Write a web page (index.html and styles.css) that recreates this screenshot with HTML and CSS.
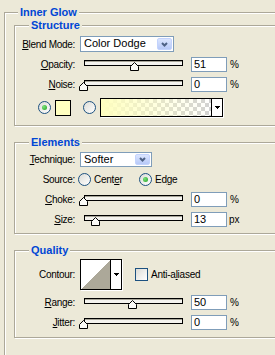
FILE: index.html
```html
<!DOCTYPE html>
<html lang="en">

<head>
    <meta charset="UTF-8">
    <meta name="viewport" content="width=device-width, initial-scale=1.0">
    <title>Inner Glow</title>
    <link rel="stylesheet" href="styles.css">
</head>

<body>
    <div class="dialog">
        <div class="group outer">
            <div class="legend">Inner Glow</div>

            <!-- Structure -->
            <div class="group inner structure">
                <div class="legend">Structure</div>
                <div class="body">
                    <div class="row tall">
                        <span class="label"><u>B</u>lend Mode:</span>
                        <div class="select blend">
                            <span class="value">Color Dodge</span>
                            <span class="drop"><svg width="7" height="5" viewBox="0 0 7 5"><path d="M1 1l2.5 2.5L6 1" fill="none" stroke="#4d6185" stroke-width="2"/></svg></span>
                        </div>
                    </div>
                    <div class="row">
                        <span class="label"><u>O</u>pacity:</span>
                        <div class="slider">
                            <div class="track"></div>
                            <svg class="thumb" style="left: 50px" width="9" height="9" viewBox="0 0 9 9"><path d="M0.5 8.5V4.5L4.5 0.5L8.5 4.5V8.5Z" fill="#fbfbf7" stroke="#000"/></svg>
                        </div>
                        <div class="field">51</div>
                        <span class="unit">%</span>
                    </div>
                    <div class="row">
                        <span class="label"><u>N</u>oise:</span>
                        <div class="slider">
                            <div class="track"></div>
                            <svg class="thumb" style="left: -1px" width="9" height="9" viewBox="0 0 9 9"><path d="M0.5 8.5V4.5L4.5 0.5L8.5 4.5V8.5Z" fill="#fbfbf7" stroke="#000"/></svg>
                        </div>
                        <div class="field">0</div>
                        <span class="unit">%</span>
                    </div>
                    <div class="row colors">
                        <span class="radio on first"></span>
                        <span class="swatch"></span>
                        <span class="radio second"></span>
                        <div class="gradient">
                            <div class="ramp"></div>
                            <div class="arrow"><svg width="5" height="3" viewBox="0 0 5 3"><path d="M0 0h5v1H0zM1 1h3v1H1zM2 2h1v1H2z"/></svg></div>
                        </div>
                    </div>
                </div>
            </div>

            <!-- Elements -->
            <div class="group inner elements">
                <div class="legend">Elements</div>
                <div class="body">
                    <div class="row">
                        <span class="label"><u>T</u>echnique:</span>
                        <div class="select technique">
                            <span class="value">Softer</span>
                            <span class="drop"><svg width="7" height="5" viewBox="0 0 7 5"><path d="M1 1l2.5 2.5L6 1" fill="none" stroke="#4d6185" stroke-width="2"/></svg></span>
                        </div>
                    </div>
                    <div class="row">
                        <span class="label near">Source:</span>
                        <label class="opt center">
                            <span class="radio"></span>
                            <span class="text">Cent<u>e</u>r</span>
                        </label>
                        <label class="opt">
                            <span class="radio on"></span>
                            <span class="text">Ed<u>g</u>e</span>
                        </label>
                    </div>
                    <div class="row">
                        <span class="label"><u>C</u>hoke:</span>
                        <div class="slider">
                            <div class="track"></div>
                            <svg class="thumb" style="left: -1px" width="9" height="9" viewBox="0 0 9 9"><path d="M0.5 8.5V4.5L4.5 0.5L8.5 4.5V8.5Z" fill="#fbfbf7" stroke="#000"/></svg>
                        </div>
                        <div class="field">0</div>
                        <span class="unit">%</span>
                    </div>
                    <div class="row">
                        <span class="label"><u>S</u>ize:</span>
                        <div class="slider">
                            <div class="track"></div>
                            <svg class="thumb" style="left: 11px" width="9" height="9" viewBox="0 0 9 9"><path d="M0.5 8.5V4.5L4.5 0.5L8.5 4.5V8.5Z" fill="#fbfbf7" stroke="#000"/></svg>
                        </div>
                        <div class="field">13</div>
                        <span class="unit px">px</span>
                    </div>
                </div>
            </div>

            <!-- Quality -->
            <div class="group inner quality">
                <div class="legend">Quality</div>
                <div class="body">
                    <div class="row contour-row">
                        <span class="label">Contour:</span>
                        <div class="contour">
                            <div class="curve"></div>
                            <div class="arrow"><svg width="5" height="3" viewBox="0 0 5 3"><path d="M0 0h5v1H0zM1 1h3v1H1zM2 2h1v1H2z"/></svg></div>
                        </div>
                        <span class="check"></span>
                        <span class="text">Anti-a<u>l</u>iased</span>
                    </div>
                    <div class="row">
                        <span class="label"><u>R</u>ange:</span>
                        <div class="slider">
                            <div class="track"></div>
                            <svg class="thumb" style="left: 48px" width="9" height="9" viewBox="0 0 9 9"><path d="M0.5 8.5V4.5L4.5 0.5L8.5 4.5V8.5Z" fill="#fbfbf7" stroke="#000"/></svg>
                        </div>
                        <div class="field">50</div>
                        <span class="unit">%</span>
                    </div>
                    <div class="row">
                        <span class="label"><u>J</u>itter:</span>
                        <div class="slider">
                            <div class="track"></div>
                            <svg class="thumb" style="left: -1px" width="9" height="9" viewBox="0 0 9 9"><path d="M0.5 8.5V4.5L4.5 0.5L8.5 4.5V8.5Z" fill="#fbfbf7" stroke="#000"/></svg>
                        </div>
                        <div class="field">0</div>
                        <span class="unit">%</span>
                    </div>
                </div>
            </div>
        </div>
    </div>
</body>

</html>
```

FILE: styles.css
```css
body {
    margin: 0;
    background-color: #ece9d8;
    font-family: "Liberation Sans", Arial, sans-serif;
    font-size: 10px;
    color: #000;
    overflow: hidden;
}

.dialog {
    width: 275px;
    height: 355px;
    overflow: hidden;
}

/* Etched group boxes */
.group {
    border: 1px solid #aca899;
    box-shadow: 1px 1px 0 #fff, inset 1px 1px 0 #fff;
}

.outer {
    margin: 12px 0 0 4px;
    width: 320px;
    padding-bottom: 40px;
}

.inner {
    margin-left: 9px;
    width: 300px;
}

.structure {
    margin-top: 6px;
}

.elements,
.quality {
    margin-top: 16px;
}

.legend {
    width: fit-content;
    height: 13px;
    line-height: 13px;
    margin: -7px 0 0 13px;
    padding: 0 2px;
    background-color: #ece9d8;
    color: #0046d5;
    font-size: 11px;
    font-weight: bold;
}

.inner .legend {
    margin-left: 14px;
}

.body {
    display: flex;
    flex-direction: column;
    gap: 5px;
}

.structure .body {
    padding: 4px 0 8px;
}

.elements .body {
    padding: 3px 0 6px;
}

.quality .body {
    padding: 2px 0 7px;
}

/* Rows */
.row {
    display: flex;
    align-items: center;
    height: 15px;
}

.row.tall {
    height: 16px;
}

.row.colors {
    height: 19px;
    margin-top: 1px;
}

.row.contour-row {
    height: 31px;
}

.label {
    flex: none;
    width: 60px;
    margin-right: 5px;
    text-align: right;
    letter-spacing: -0.3px;
    white-space: nowrap;
}

.label.near {
    margin-right: 3px;
}

.text {
    letter-spacing: -0.25px;
    white-space: nowrap;
}

u {
    text-underline-offset: 1px;
}

/* Combo boxes */
.select {
    display: flex;
    box-sizing: border-box;
    border: 1px solid #7f9db9;
    background-color: #fff;
    font-size: 11px;
}

.select.blend {
    width: 94px;
    height: 16px;
}

.select.technique {
    width: 72px;
    height: 15px;
}

.select .value {
    flex: 1;
    padding-left: 3px;
    line-height: 13px;
}

.select .drop {
    width: 15px;
    margin: 1px 1px 1px 0;
    box-sizing: border-box;
    border: 1px solid #c3d3fd;
    border-radius: 2px;
    background: linear-gradient(#dbe5fe, #b7c9f8);
    display: flex;
    align-items: center;
    justify-content: center;
}

/* Sliders */
.slider {
    position: relative;
    flex: none;
    width: 107px;
    height: 15px;
    margin-right: 4px;
}

.track {
    height: 6px;
    margin: 3px 4px 0;
    box-sizing: border-box;
    border: 1px solid #000;
    background-color: #f4f3ee;
    box-shadow: inset 0 1px 0 #a7a598;
}

.thumb {
    position: absolute;
    top: 5px;
    display: block;
}

.field {
    flex: none;
    width: 36px;
    height: 15px;
    box-sizing: border-box;
    border: 1px solid #7f9db9;
    background-color: #fff;
    padding-left: 2px;
    font-size: 11px;
    line-height: 13px;
}

.unit {
    margin-left: 3px;
    font-size: 10px;
}

.unit.px {
    margin-left: 2px;
}

/* Radios and check boxes */
.radio,
.check {
    flex: none;
    width: 13px;
    height: 13px;
    box-sizing: border-box;
    border: 1px solid #1c5180;
    background: linear-gradient(135deg, #dcdcd7, #fff);
}

.radio {
    border-radius: 50%;
    display: flex;
    align-items: center;
    justify-content: center;
}

.radio.on::after {
    content: "";
    width: 5px;
    height: 5px;
    border-radius: 50%;
    background: radial-gradient(circle at 35% 35%, #7ce27c, #21a121);
}

.opt {
    display: flex;
    align-items: center;
    gap: 3px;
}

.opt.center {
    width: 61px;
}

.radio.first {
    margin-left: 23px;
}

.swatch {
    flex: none;
    width: 16px;
    height: 16px;
    margin-left: 4px;
    box-sizing: border-box;
    border: 1px solid #000;
    background-color: #ffffc0;
}

.radio.second {
    margin-left: 12px;
}

/* Gradient and contour pickers */
.gradient,
.contour {
    display: flex;
    flex: none;
    box-sizing: border-box;
    border: 1px solid #000;
    box-shadow: 1px 1px 0 #fff;
}

.gradient {
    width: 123px;
    height: 19px;
    margin-left: 4px;
}

.ramp {
    flex: 1;
    background:
        linear-gradient(to right, #ffffc0, rgba(255, 255, 192, 0)),
        conic-gradient(#d2d2d2 25%, #fff 0 50%, #d2d2d2 0 75%, #fff 0) 0 0 / 8px 8px;
}

.arrow {
    width: 10px;
    border-left: 1px solid #000;
    background-color: #fff;
    display: flex;
    align-items: center;
    justify-content: center;
}

.arrow svg {
    display: block;
}

.contour {
    width: 42px;
    height: 31px;
}

.curve {
    width: 29px;
    background: linear-gradient(to top left, #aca899 50%, #fff 50%);
}

.check {
    margin-left: 13px;
    margin-right: 3px;
}
```
